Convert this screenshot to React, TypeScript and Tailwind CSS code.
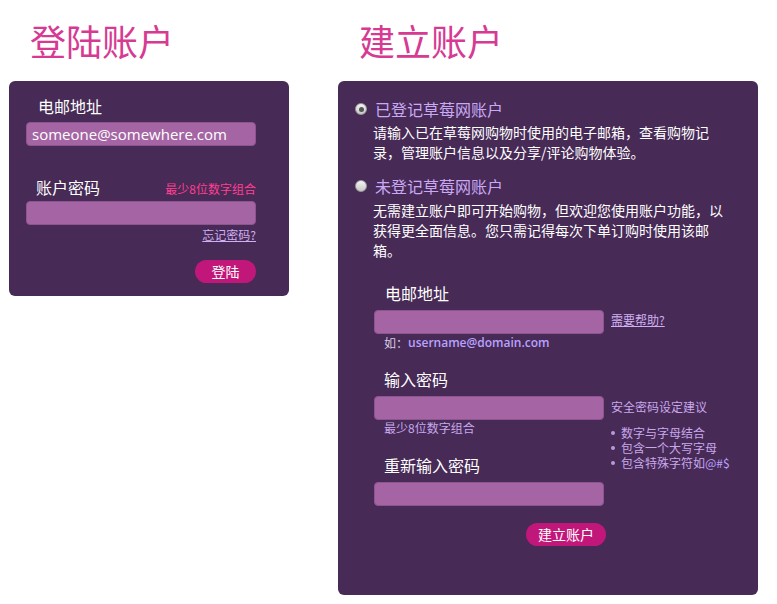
import React from 'react';

const cjk = "font-['Noto_Sans_CJK_SC','Noto_Sans',sans-serif]";

function Radio({ checked }: { checked?: boolean }) {
  return (
    <span className="flex h-[12px] w-[12px] shrink-0 items-center justify-center rounded-full border border-[#9a9a9a] bg-gradient-to-b from-[#f4f4f4] to-[#c8c8c8]">
      {checked && <span className="h-[5px] w-[5px] rounded-full bg-[#555]" />}
    </span>
  );
}

function Field({ value }: { value?: string }) {
  return (
    <input
      readOnly
      defaultValue={value}
      className="h-[24px] w-[230px] rounded-[4px] border border-[#8e548f] bg-[#a565a5] px-[5px] font-['Open_Sans',sans-serif] text-[15px] font-medium text-white outline-none"
    />
  );
}

const tips = ['数字与字母结合', '包含一个大写字母'];

export default function App() {
  return (
    <div className={`${cjk} flex min-h-[604px] w-[777px] gap-[49px] bg-white pl-[9px]`}>
      {/* login */}
      <div className="flex w-[280px] flex-col">
        <h1 className="mt-[19px] pl-[21px] text-[36px] leading-[42px] font-normal text-[#d63a93]">登陆账户</h1>
        <div className="mt-[20px] flex flex-col rounded-[6px] bg-[#472a56] pt-[15px] pr-[33px] pb-[13px] pl-[17px]">
          <label className="pl-[12px] text-[16px] leading-[20px] text-white">电邮地址</label>
          <div className="mt-[5px]">
            <Field value="someone@somewhere.com" />
          </div>
          <div className="mt-[31px] flex items-end justify-between">
            <label className="pl-[10px] text-[16px] leading-[20px] text-white">账户密码</label>
            <span className="text-[12px] leading-[16px] text-[#ff3f91]">最少8位数字组合</span>
          </div>
          <div className="mt-[3px]">
            <Field />
          </div>
          <div className="mt-[2px] flex justify-end">
            <a className="text-[12px] leading-[16px] text-[#cfb0f0] underline">忘记密码?</a>
          </div>
          <div className="mt-[17px] flex justify-end">
            <button className="h-[23px] w-[61px] rounded-full bg-[#c2177a] text-[14px] leading-[23px] text-white">登陆</button>
          </div>
        </div>
      </div>

      {/* register */}
      <div className="flex w-[420px] flex-col">
        <h1 className="mt-[19px] pl-[21px] text-[36px] leading-[42px] font-normal text-[#d63a93]">建立账户</h1>
        <div className="mt-[20px] flex flex-col rounded-[6px] bg-[#472a56] pt-[18px] pr-[33px] pb-[49px] pl-[17px]">
          <div className="flex items-center gap-[8px]">
            <Radio checked />
            <span className="text-[16px] leading-[20px] text-[#c9a9f4]">已登记草莓网账户</span>
          </div>
          <p className="mt-[3px] w-[370px] pl-[18px] text-[14px] leading-[20px] text-white">
            请输入已在草莓网购物时使用的电子邮箱，查看购物记录，管理账户信息以及分享/评论购物体验。
          </p>
          <div className="mt-[14px] flex items-center gap-[8px]">
            <Radio />
            <span className="text-[16px] leading-[20px] text-[#c9a9f4]">未登记草莓网账户</span>
          </div>
          <p className="mt-[4px] w-[370px] pl-[18px] text-[14px] leading-[20px] text-white">
            无需建立账户即可开始购物，但欢迎您使用账户功能，以获得更全面信息。您只需记得每次下单订购时使用该邮箱。
          </p>

          <div className="mt-[23px] flex pl-[19px]">
            <div className="flex w-[232px] shrink-0 flex-col">
              <label className="pl-[11px] text-[16px] leading-[20px] text-white">电邮地址</label>
              <div className="mt-[6px] h-[24px]">
                <Field />
              </div>
              <div className="mt-[2px] flex h-[16px] items-center pl-[10px] text-[12px] leading-[16px]">
                <span className="text-[#d8cce4]">如：</span>
                <span className="font-['Open_Sans',sans-serif] font-semibold text-[#b9a2ff]">username@domain.com</span>
              </div>
              <label className="mt-[18px] pl-[10px] text-[16px] leading-[20px] text-white">输入密码</label>
              <div className="mt-[6px] h-[24px]">
                <Field />
              </div>
              <span className="mt-[1px] h-[16px] pl-[10px] text-[12px] leading-[16px] text-[#c8a8ec]">最少8位数字组合</span>
              <label className="mt-[19px] pl-[10px] text-[16px] leading-[20px] text-white">重新输入密码</label>
              <div className="mt-[6px] h-[24px]">
                <Field />
              </div>
              <div className="mt-[18px] flex justify-end">
                <button className="h-[23px] w-[80px] rounded-full bg-[#c2177a] text-[14px] leading-[23px] text-white">建立账户</button>
              </div>
            </div>
            <div className="ml-[5px] flex flex-col whitespace-nowrap pt-[29px] text-[12px] leading-[16px]">
              <a className="text-[#cfb0f0] underline">需要帮助?</a>
              <span className="mt-[71px] text-[#c8a8ec]">安全密码设定建议</span>
              <ul className="mt-[10px] flex flex-col text-[#c8a8ec]">
                {tips.map((t) => (
                  <li key={t} className="flex items-center gap-[6px] leading-[15px]">
                    <span className="h-[4px] w-[4px] rounded-full bg-[#b89ad8]" />
                    {t}
                  </li>
                ))}
                <li className="flex items-center gap-[6px] leading-[15px]">
                  <span className="h-[4px] w-[4px] rounded-full bg-[#b89ad8]" />
                  <span>
                    包含特殊字符如<span className="text-[#b9a2ff]">@#$</span>
                  </span>
                </li>
              </ul>
            </div>
          </div>
        </div>
      </div>
    </div>
  );
}
